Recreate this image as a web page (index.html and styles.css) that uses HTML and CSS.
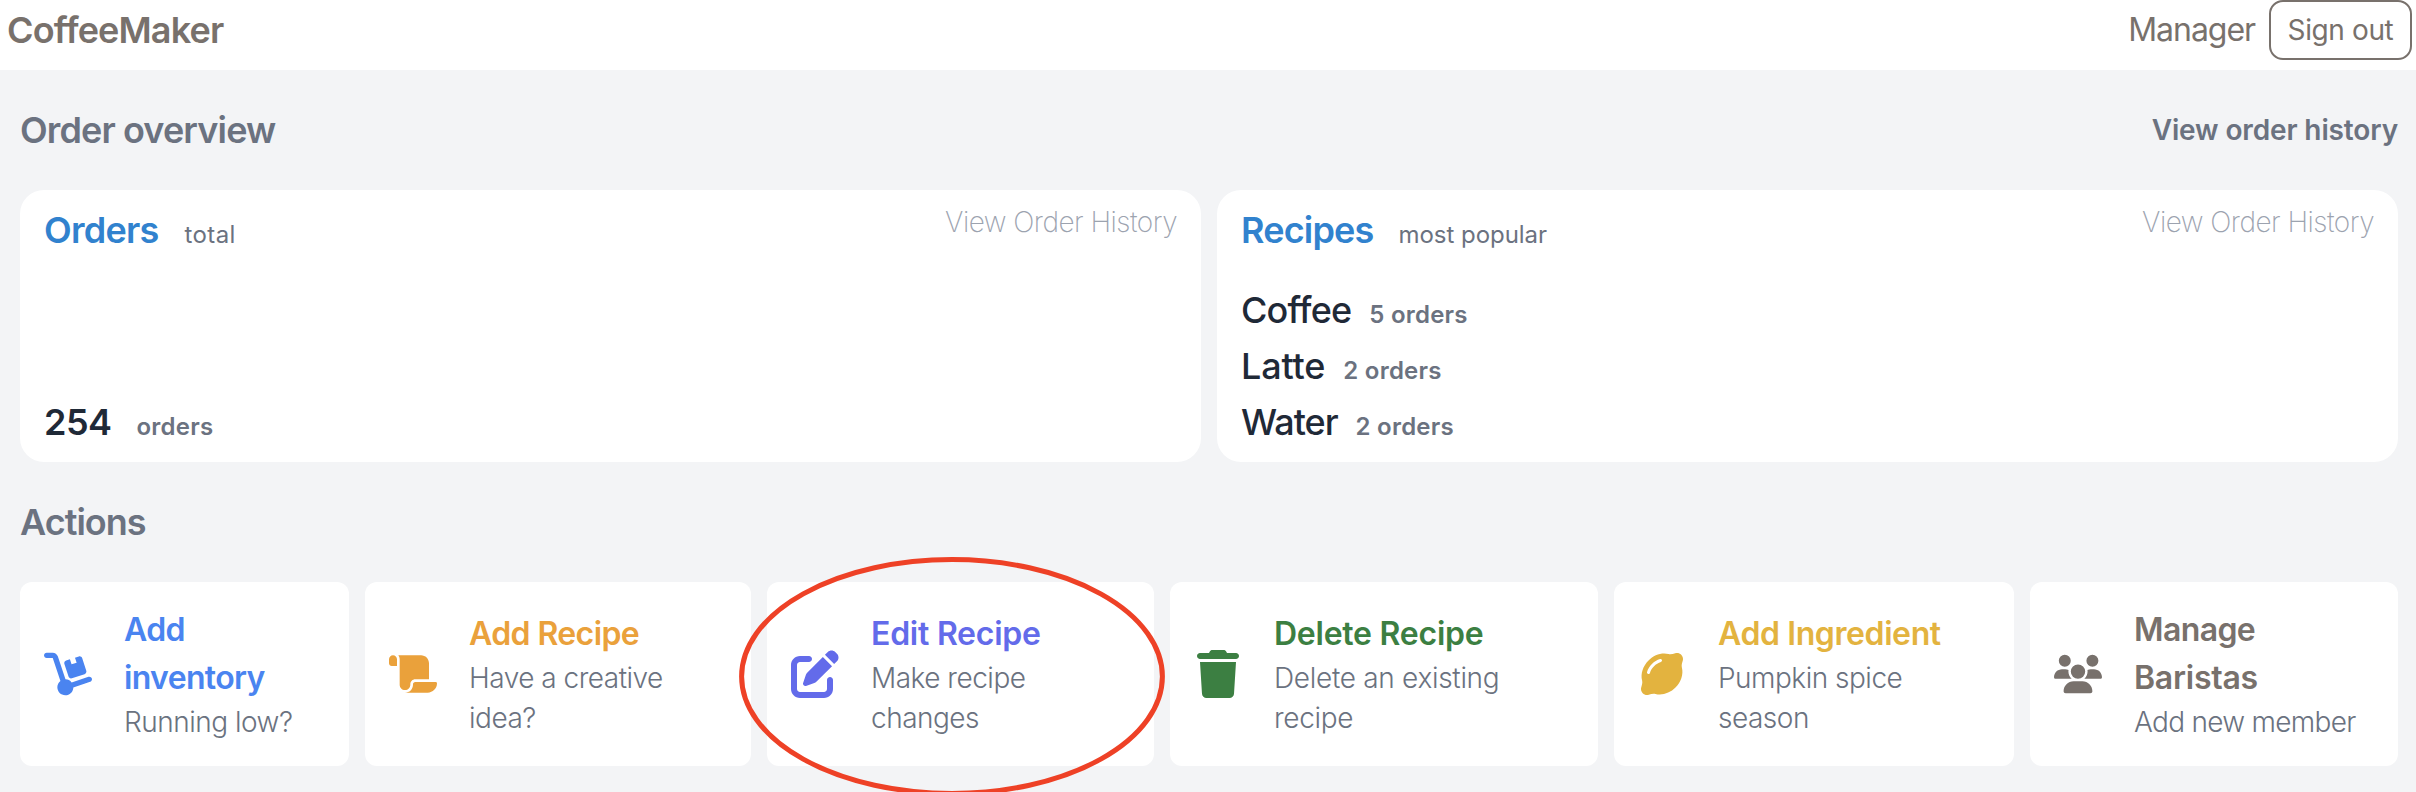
FILE: index.html
```html
<!DOCTYPE html>
<html lang="en">
<head>
<meta charset="utf-8">
<title>CoffeeMaker</title>
<link rel="stylesheet" href="styles.css">
</head>
<body>
<header class="topbar">
  <div class="brand">CoffeeMaker</div>
  <div class="account">
    <span class="role">Manager</span>
    <button class="signout" type="button">Sign out</button>
  </div>
</header>

<main class="page">
  <div class="section-head">
    <h2 class="section-title overview-title">Order overview</h2>
    <a class="history-link">View order history</a>
  </div>

  <section class="stats">
    <article class="stat">
      <div class="stat-head">
        <div class="pair"><h3 class="stat-title orders-title">Orders</h3><span class="note total">total</span></div>
        <a class="stat-link">View Order History</a>
      </div>
      <div class="pair"><span class="count">254</span><span class="unit">orders</span></div>
    </article>
    <article class="stat">
      <div class="stat-head">
        <div class="pair"><h3 class="stat-title">Recipes</h3><span class="note popular">most popular</span></div>
        <a class="stat-link">View Order History</a>
      </div>
      <div class="ranking">
        <div class="drink"><span class="drink-name coffee">Coffee</span><span class="unit">5 orders</span></div>
        <div class="drink"><span class="drink-name latte">Latte</span><span class="unit">2 orders</span></div>
        <div class="drink"><span class="drink-name water">Water</span><span class="unit">2 orders</span></div>
      </div>
    </article>
  </section>

  <h2 class="section-title actions-title">Actions</h2>

  <section class="actions">
    <article class="action blue">
      <svg class="icon" viewBox="0 0 576 512"><path d="M0 32C0 14.3 14.3 0 32 0h72.9c27.5 0 52 17.6 60.7 43.8L257.7 320c30.1 .5 56.8 14.9 74 37l202.1-67.4c16.8-5.6 34.9 3.5 40.5 20.2s-3.5 34.9-20.2 40.5L352 417.7c-.9 52.2-43.5 94.3-96 94.3c-53 0-96-43-96-96c0-30.8 14.5-58.2 37-75.8L104.9 64H32C14.3 64 0 49.7 0 32zM244.8 134.5c-5.5-16.8 3.7-34.9 20.5-40.3L311 79.4l19.8 60.9 60.9-19.8L371.8 59.6l45.7-14.8c16.8-5.5 34.9 3.7 40.3 20.5l49.4 152.2c5.5 16.8-3.7 34.9-20.5 40.3L334.7 307.2c-16.8 5.5-34.9-3.7-40.3-20.5L244.8 134.5z"/></svg>
      <div class="action-text"><h3 class="action-title tight">Add<br>inventory</h3><p class="hint">Running low?</p></div>
    </article>
    <article class="action orange">
      <svg class="icon" viewBox="0 0 576 512"><path d="M0 80v48c0 17.7 14.3 32 32 32H48 96V80c0-26.5-21.5-48-48-48S0 53.5 0 80zM112 32c10 13.4 16 30 16 48V384c0 35.3 28.7 64 64 64s64-28.7 64-64v-5.3c0-32.4 26.3-58.7 58.7-58.7H480V128c0-53-43-96-96-96H112zM464 480c61.9 0 112-50.1 112-112c0-8.8-7.2-16-16-16H314.7c-14.7 0-26.7 11.9-26.7 26.7V384c0 53-43 96-96 96H368h96z"/></svg>
      <div class="action-text"><h3 class="action-title snug">Add Recipe</h3><p class="hint">Have a creative<br>idea?</p></div>
    </article>
    <article class="action indigo">
      <svg class="icon" viewBox="0 0 512 512"><path d="M471.6 21.7c-21.9-21.9-57.3-21.9-79.2 0L362.3 51.7l97.9 97.9 30.1-30.1c21.9-21.9 21.9-57.3 0-79.2L471.6 21.7zm-299.2 220c-6.1 6.1-10.8 13.6-13.5 21.9l-29.6 88.8c-2.9 8.6-.6 18.1 5.8 24.6s15.9 8.7 24.6 5.8l88.8-29.6c8.2-2.7 15.7-7.4 21.9-13.5L437.7 172.3 339.7 74.3 172.4 241.7zM96 64C43 64 0 107 0 160V416c0 53 43 96 96 96H352c53 0 96-43 96-96V320c0-17.7-14.3-32-32-32s-32 14.3-32 32v96c0 17.7-14.3 32-32 32H96c-17.7 0-32-14.3-32-32V160c0-17.7 14.3-32 32-32h96c17.7 0 32-14.3 32-32s-14.3-32-32-32H96z"/></svg>
      <div class="action-text"><h3 class="action-title loose">Edit Recipe</h3><p class="hint">Make recipe<br>changes</p></div>
      <svg class="marker" viewBox="0 0 426 239"><ellipse cx="213" cy="119.5" rx="210.4" ry="116.9"/></svg>
    </article>
    <article class="action green">
      <svg class="icon" viewBox="-32 0 512 512"><path d="M135.2 17.7C140.6 6.8 151.7 0 163.8 0H284.2c12.1 0 23.2 6.8 28.6 17.7L320 32h96c17.7 0 32 14.3 32 32s-14.3 32-32 32H32C14.3 96 0 81.7 0 64S14.3 32 32 32h96l7.2-14.3zM32 128H416L394.8 467c-1.6 25.3-22.6 45-47.9 45H101.1c-25.3 0-46.3-19.7-47.9-45L32 128z"/></svg>
      <div class="action-text"><h3 class="action-title loose">Delete Recipe</h3><p class="hint wide">Delete an existing<br>recipe</p></div>
    </article>
    <article class="action yellow">
      <svg class="icon" viewBox="-32 0 512 512"><path d="M448 96c0-35.3-28.7-64-64-64c-6.6 0-13 1-19 2.9c-22.5 7-48.1 14.9-71 9c-75.2-19.1-156.4 11-213.7 68.3S-7.2 250.8 11.9 326c5.8 22.9-2 48.4-9 71C1 403 0 409.4 0 416c0 35.3 28.7 64 64 64c6.6 0 13-1 19.1-2.9c22.5-7 48.1-14.9 71-9c75.2 19.1 156.4-11 213.7-68.3s87.5-138.5 68.3-213.7c-5.8-22.9 2-48.4 9-71c1.9-6 2.9-12.4 2.9-19.1zM212.5 127.4c-54.6 16-101.1 62.5-117.1 117.1C92.9 253 84 257.8 75.5 255.4S62.2 244 64.6 235.5c19.1-65.1 73.7-119.8 138.9-138.9c8.5-2.5 17.4 2.4 19.9 10.9s-2.4 17.4-10.9 19.9z"/></svg>
      <div class="action-text"><h3 class="action-title medium">Add Ingredient</h3><p class="hint">Pumpkin spice<br>season</p></div>
    </article>
    <article class="action stone">
      <svg class="icon" viewBox="0 0 640 512"><path d="M144 0a80 80 0 1 1 0 160A80 80 0 1 1 144 0zM512 0a80 80 0 1 1 0 160A80 80 0 1 1 512 0zM0 298.7C0 239.8 47.8 192 106.7 192h42.7c15.9 0 31 3.5 44.6 9.7c-1.3 7.2-1.9 14.7-1.9 22.3c0 38.2 16.8 72.5 43.3 96c-.2 0-.4 0-.7 0H21.3C9.6 320 0 310.4 0 298.7zM405.3 320c-.2 0-.4 0-.7 0c26.6-23.5 43.3-57.8 43.3-96c0-7.6-.7-15-1.9-22.3c13.6-6.3 28.7-9.7 44.6-9.7h42.7C592.2 192 640 239.8 640 298.7c0 11.8-9.6 21.3-21.3 21.3H405.3zM224 224a96 96 0 1 1 192 0 96 96 0 1 1 -192 0zM128 485.3C128 411.7 187.7 352 261.3 352H378.7C452.3 352 512 411.7 512 485.3c0 14.7-11.9 26.7-26.7 26.7H154.7c-14.7 0-26.7-11.9-26.7-26.7z"/></svg>
      <div class="action-text"><h3 class="action-title"><span class="snug">Manage</span><br><span class="loose">Baristas</span></h3><p class="hint narrow">Add new member</p></div>
    </article>
  </section>
</main>
</body>
</html>
```
FILE: styles.css
```css
* { box-sizing: border-box; }

body {
  margin: 0;
  height: 792px;
  overflow: hidden;
  background: #f3f4f6;
  font-family: Inter, "Liberation Sans", sans-serif;
  color: #6b7280;
}

h2, h3, p { margin: 0; }

/* Header */
.topbar {
  display: flex;
  justify-content: space-between;
  height: 70px;
  padding: 0 4px 10px 7px;
  background: #fff;
  color: #78716c;
}
.brand { font-size: 36px; font-weight: 600; line-height: 60px; letter-spacing: -0.86px; }
.account { display: flex; align-items: center; gap: 14px; }
.role { font-size: 32px; line-height: 60px; letter-spacing: -1.05px; }
.signout {
  width: 143px;
  height: 60px;
  padding: 0;
  border: 2px solid #78716c;
  border-radius: 14px;
  background: transparent;
  color: inherit;
  font: 400 28px/56px Inter, "Liberation Sans", sans-serif;
  letter-spacing: -0.38px;
}

/* Sections */
.page { padding: 32px 18px 0 20px; }
.section-head { display: flex; justify-content: space-between; align-items: center; }
.section-title { font-size: 36px; font-weight: 600; line-height: 56px; }
.overview-title { letter-spacing: -0.88px; }
.actions-title { margin: 32px 0; letter-spacing: -0.98px; }
.history-link { font-size: 28px; font-weight: 600; letter-spacing: -0.13px; }

/* Statistics */
.stats { display: grid; grid-template-columns: 1fr 1fr; gap: 16px; margin-top: 32px; }
.stat {
  display: flex;
  flex-direction: column;
  justify-content: space-between;
  height: 272px;
  padding: 12px 24px;
  border-radius: 24px;
  background: #fff;
}
.stat-head { display: flex; justify-content: space-between; align-items: flex-start; }
.pair { display: flex; align-items: baseline; gap: 25px; line-height: 56px; }
.stat-title { color: #3182ce; font-size: 36px; font-weight: 600; letter-spacing: -0.83px; }
.orders-title { letter-spacing: -0.74px; }
.note { font-size: 24px; line-height: 32px; }
.total { padding-left: 1px; letter-spacing: 0.39px; }
.popular { letter-spacing: -0.03px; }
.stat-link { color: #9ca3af; font-size: 28px; font-weight: 200; line-height: 40px; letter-spacing: -0.53px; }
.count { color: #1f2937; font-size: 36px; font-weight: 600; letter-spacing: -0.54px; }
.unit { font-size: 24px; font-weight: 600; line-height: 32px; letter-spacing: 0.23px; }
.drink { display: flex; align-items: baseline; gap: 18px; line-height: 56px; }
.drink-name { color: #1f2937; font-size: 36px; font-weight: 500; }
.coffee { letter-spacing: -0.84px; }
.latte { letter-spacing: -0.15px; }
.water { letter-spacing: -1px; }

/* Actions */
.actions { display: grid; grid-template-columns: 329px 386px 387px 428px 400px 368px; gap: 16px; }
.action {
  position: relative;
  display: flex;
  align-items: center;
  gap: 32px;
  height: 184px;
  padding: 24px;
  border-radius: 12px;
  background: #fff;
}
.icon { flex: none; width: 48px; height: 48px; fill: currentColor; }
.action-text { white-space: nowrap; }
.action-title { font-size: 32px; font-weight: 600; line-height: 48px; }
.hint { color: #6b7280; font-size: 28px; font-weight: 350; line-height: 40px; letter-spacing: -0.5px; }
.wide { letter-spacing: -0.3px; }
.narrow { letter-spacing: -0.7px; }
.tight { letter-spacing: -0.66px; }
.snug { letter-spacing: -0.6px; }
.medium { letter-spacing: -0.4px; }
.loose { letter-spacing: -0.24px; }

.blue { color: #4a84f0; }
.orange { color: #eaa13b; }
.indigo { color: #636bea; }
.green { color: #3c7f42; }
.yellow { color: #e3b33f; }
.stone { color: #78716c; }

/* Emphasis ring over the edit card */
.marker {
  position: absolute;
  z-index: 1;
  top: -25.5px;
  left: -28px;
  width: 426px;
  height: 239px;
  fill: none;
  stroke: #ee4126;
  stroke-width: 5;
  pointer-events: none;
}
```
